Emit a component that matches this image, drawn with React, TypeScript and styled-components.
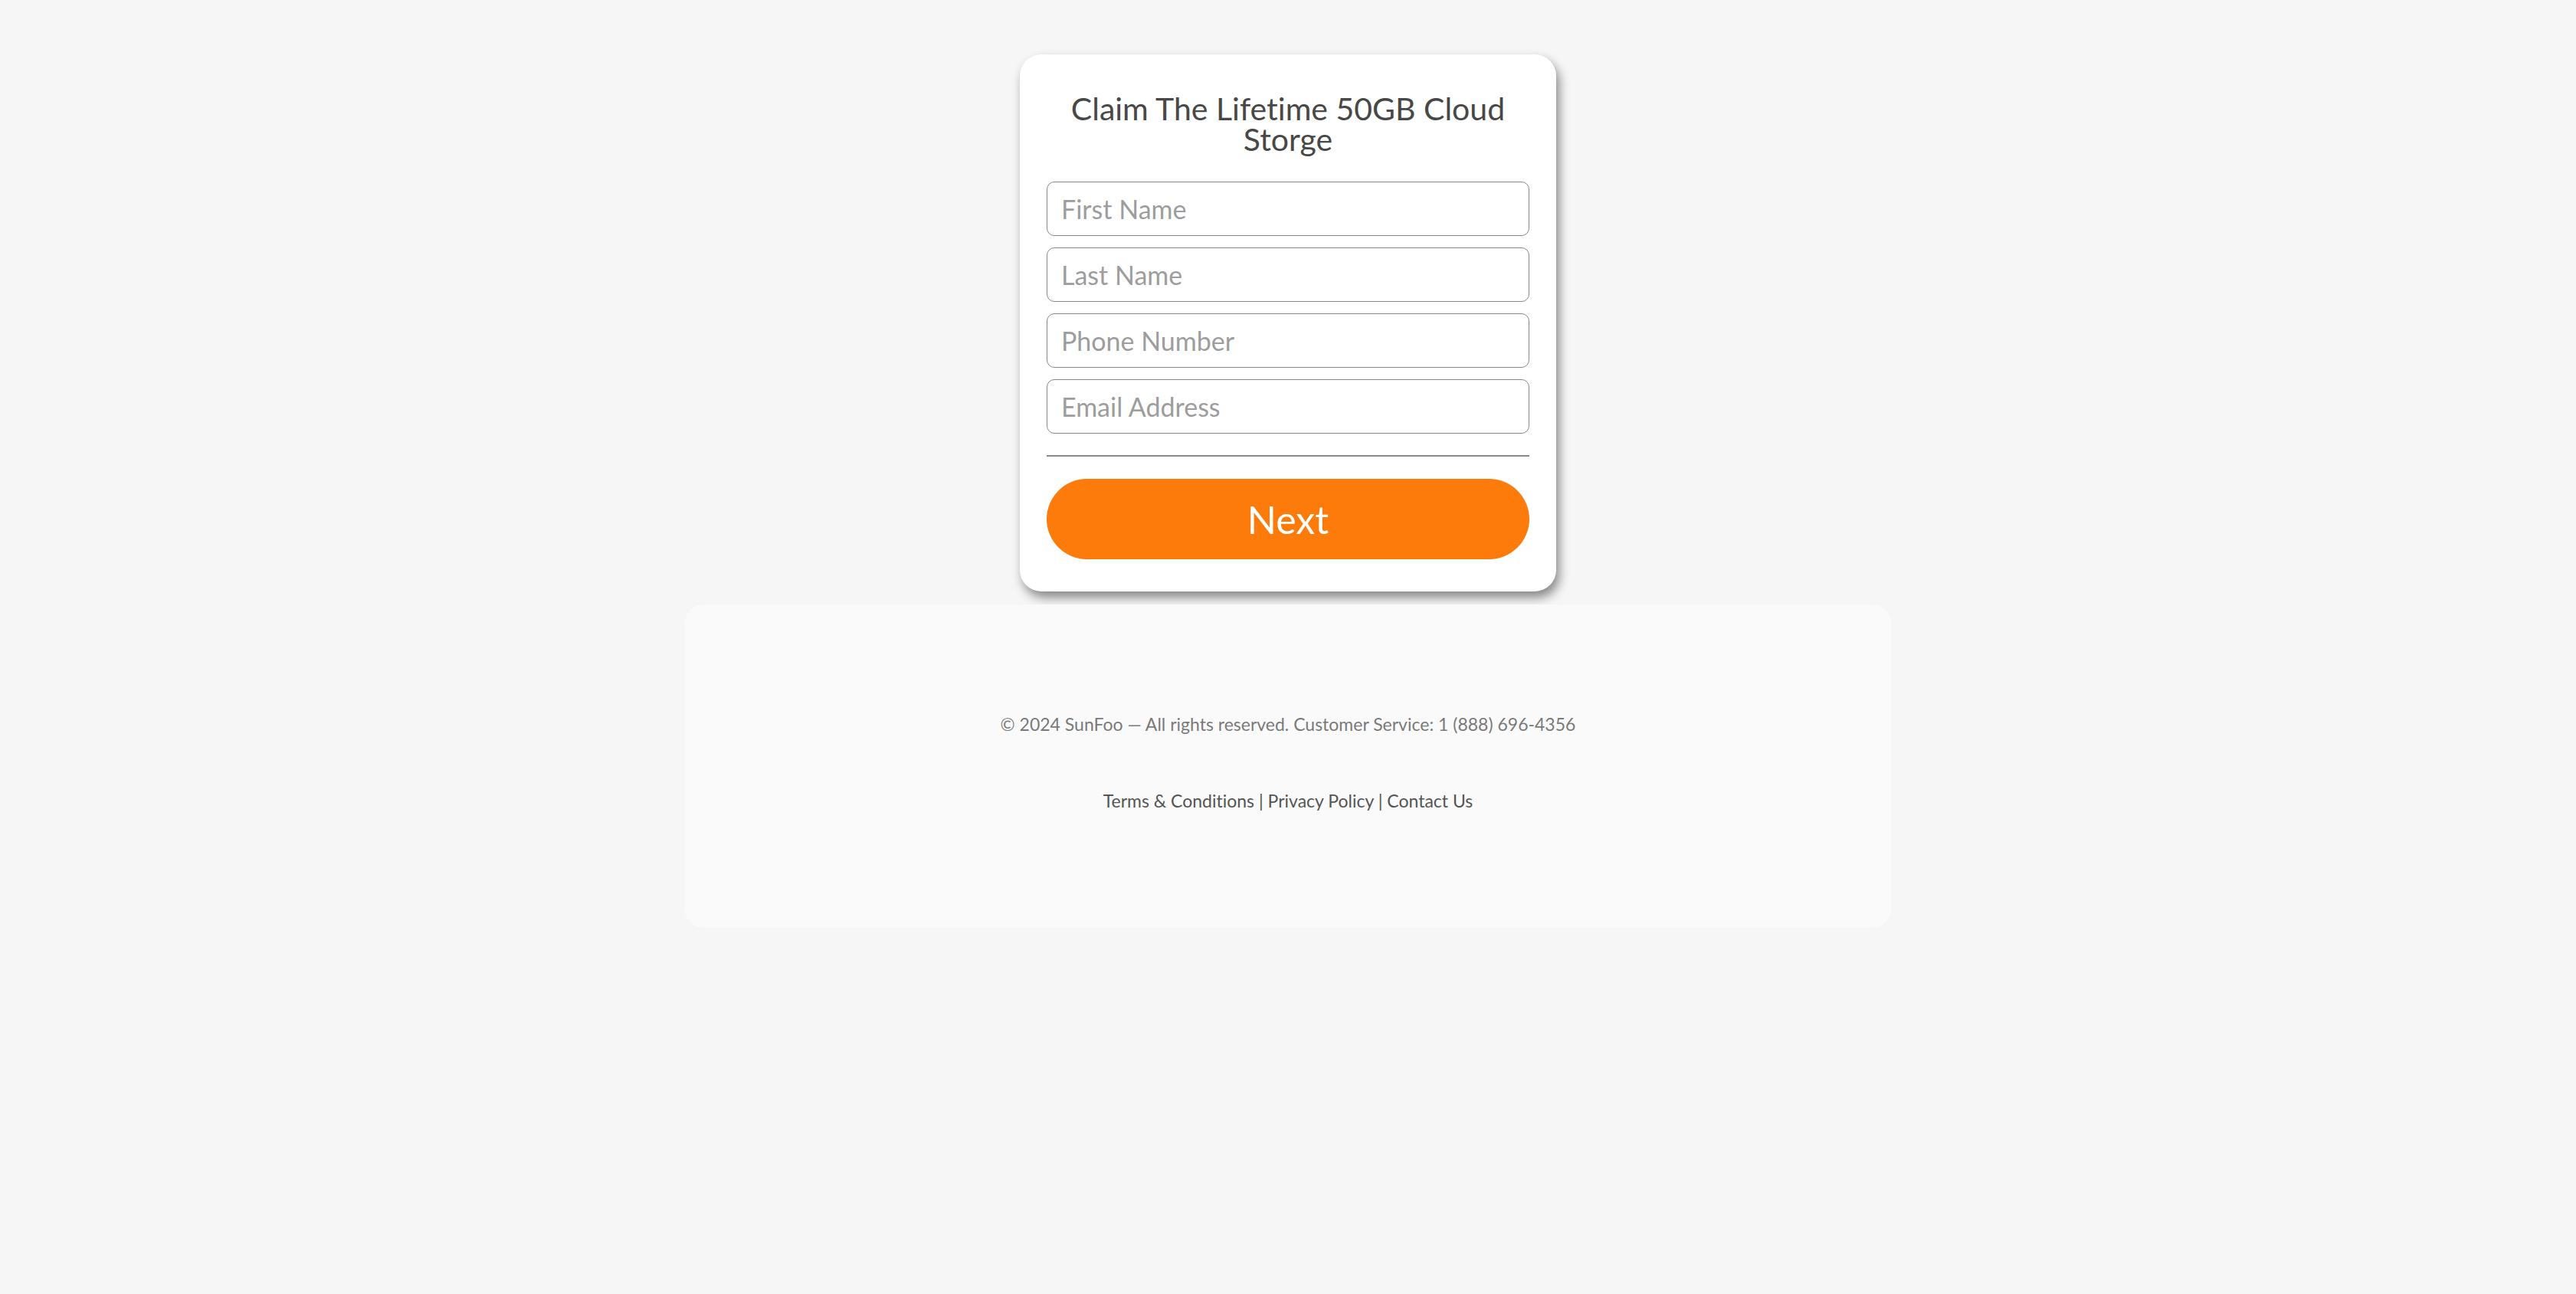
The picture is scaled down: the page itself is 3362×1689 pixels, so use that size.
import React from "react";
import styled, { createGlobalStyle } from "styled-components";

const GlobalStyle = createGlobalStyle`
  html, body {
    margin: 0;
    padding: 0;
    background-color: #f6f6f6;
    font-family: "Lato", "Liberation Sans", sans-serif;
    font-variant-ligatures: none;
  }
  * {
    box-sizing: border-box;
  }
`;

const fields = ["First Name", "Last Name", "Phone Number", "Email Address"];

const App: React.FC = () => {
  return (
    <Page>
      <GlobalStyle />
      <Card>
        <Title>Claim The Lifetime 50GB Cloud Storge</Title>
        <Form>
          {fields.map((f) => (
            <Field key={f} type="text" placeholder={f} />
          ))}
        </Form>
        <Divider />
        <NextButton type="button">Next</NextButton>
      </Card>
      <Footer>
        <Copy>© 2024 SunFoo — All rights reserved. Customer Service: 1 (888) 696-4356</Copy>
        <Links>
          <Link href="#">Terms &amp; Conditions</Link> | <Link href="#">Privacy Policy</Link> |{" "}
          <Link href="#">Contact Us</Link>
        </Links>
      </Footer>
    </Page>
  );
};

export default App;

const Page = styled.div`
  width: 100%;
  min-height: 1689px;
  padding-top: 71px;
  display: flex;
  flex-direction: column;
  align-items: center;
  gap: 17px;
`;

const Card = styled.div`
  width: 700px;
  height: 701px;
  background-color: #ffffff;
  border-radius: 28px;
  padding: 51px 35px 0;
  display: flex;
  flex-direction: column;
  box-shadow: 4px 8px 14px rgba(0, 0, 0, 0.45);
`;

const Title = styled.h1`
  margin: 0 10px;
  font-size: 41px;
  font-weight: 400;
  line-height: 40px;
  color: #484848;
  text-align: center;
  font-variant-ligatures: none;
`;

const Form = styled.div`
  margin-top: 35px;
  display: flex;
  flex-direction: column;
  gap: 15px;
`;

const Field = styled.input`
  width: 100%;
  height: 71px;
  border: 1.5px solid #888888;
  border-radius: 10px;
  padding: 0 18px;
  font-family: "Lato", "Liberation Sans", sans-serif;
  font-size: 34px;
  color: #444;
  background: #fff;
  outline: none;

  &::placeholder {
    color: #9d9d9d;
  }
`;

const Divider = styled.hr`
  width: 100%;
  margin: 28px 0 0;
  border: none;
  border-top: 2px solid #888888;
`;

const NextButton = styled.button`
  width: 100%;
  height: 105px;
  margin-top: 29px;
  border: none;
  border-radius: 53px;
  background-color: #fd7b0a;
  color: #ffffff;
  font-family: "Lato", "Liberation Sans", sans-serif;
  font-size: 50px;
  font-weight: 400;
  cursor: pointer;
`;

const Footer = styled.footer`
  width: 1574px;
  height: 422px;
  background-color: #fafafa;
  border-radius: 24px;
  display: flex;
  flex-direction: column;
  align-items: center;
  padding-top: 141px;
  gap: 70px;
`;

const Copy = styled.p`
  margin: 0;
  font-size: 23px;
  line-height: 30px;
  color: #7a7a7a;
`;

const Links = styled.p`
  margin: 0;
  font-size: 23px;
  line-height: 30px;
  color: #555555;
`;

const Link = styled.a`
  color: #555555;
  text-decoration: none;
`;
